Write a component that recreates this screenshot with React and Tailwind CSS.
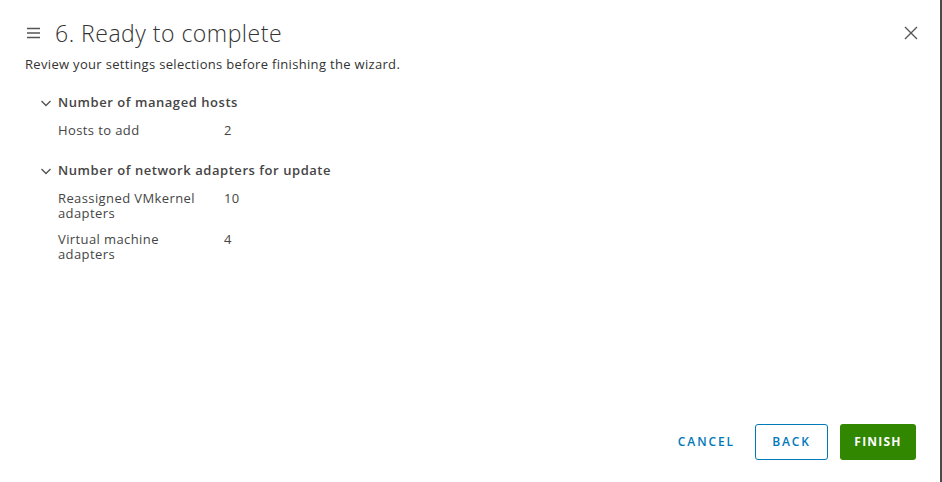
import React from 'react';

const sections = [
  {
    title: 'Number of managed hosts',
    rows: [{ label: 'Hosts to add', value: '2' }],
  },
  {
    title: 'Number of network adapters for update',
    rows: [
      { label: 'Reassigned VMkernel adapters', value: '10' },
      { label: 'Virtual machine adapters', value: '4' },
    ],
  },
];

const Chevron = () => (
  <svg width="12" height="12" viewBox="0 0 12 12" className="text-[#565656]">
    <path d="M1.5 4l4.5 4.5L10.5 4" fill="none" stroke="currentColor" strokeWidth="1.4" />
  </svg>
);

const App = () => {
  return (
    <div className="w-[942px] h-[482px] bg-white border-r-2 border-[#4a4a4a] flex flex-col text-[#333333]" style={{ fontFamily: '"Open Sans", Lato, sans-serif' }}>
      <div className="flex items-center pl-[27px] pr-[21px] pt-[18px]">
        <svg width="14" height="12" viewBox="0 0 14 12" className="text-[#565656]">
          <path d="M0 1.5h13M0 6h13M0 10.5h13" stroke="currentColor" strokeWidth="1.3" />
        </svg>
        <h1 className="ml-[14px] text-[23px] leading-[30px] font-light tracking-[0.5px] text-[#333]">6. Ready to complete</h1>
        <button className="ml-auto text-[#565656]">
          <svg width="16" height="16" viewBox="0 0 16 16">
            <path d="M2 2l12 12M14 2L2 14" stroke="currentColor" strokeWidth="1.4" />
          </svg>
        </button>
      </div>
      <p className="ml-[25px] mt-[7px] text-[13px] leading-[18px] tracking-[0.32px]">Review your settings selections before finishing the wizard.</p>

      <div className="flex flex-col gap-[23px] mt-[20px] ml-[40px]">
        {sections.map((s) => (
          <div key={s.title}>
            <div className="flex items-center gap-[6px] h-[20px]">
              <Chevron />
              <span className="text-[13px] font-semibold tracking-[0.55px] text-[#454545]">{s.title}</span>
            </div>
            <div className="flex flex-col gap-[11px] mt-[10px] ml-[18px]">
              {s.rows.map((r) => (
                <div key={r.label} className="flex text-[13px] leading-[15px] tracking-[0.4px] text-[#454545]">
                  <span className="w-[166px] pr-[14px]">{r.label}</span>
                  <span>{r.value}</span>
                </div>
              ))}
            </div>
          </div>
        ))}
      </div>

      <div className="mt-auto mb-[22px] mr-[24px] flex justify-end items-center gap-[12px]">
        <button className="h-[36px] text-[12px] font-semibold tracking-[1.9px] text-[#0079b8]">CANCEL</button>
        <button className="h-[36px] w-[73px] ml-[8px] rounded-[3px] border border-[#0079b8] text-[12px] font-semibold tracking-[1.9px] text-[#0079b8]">BACK</button>
        <button className="h-[36px] w-[76px] rounded-[3px] bg-[#318700] text-[12px] font-bold tracking-[1.2px] text-white">FINISH</button>
      </div>
    </div>
  );
};

export default App;
